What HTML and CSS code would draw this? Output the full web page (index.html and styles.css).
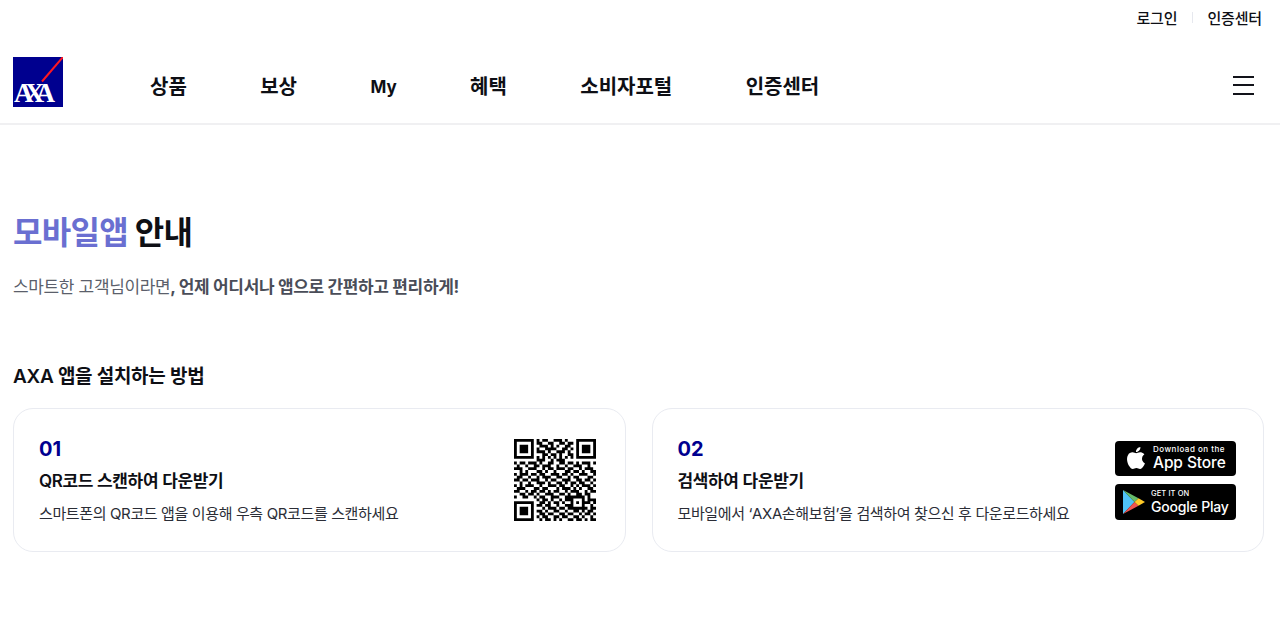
FILE: index.html
```html
<!DOCTYPE html>
<html lang="ko">
<head>
  <meta charset="UTF-8" />
  <meta name="viewport" content="width=device-width, initial-scale=1.0" />
  <title>모바일앱 안내</title>
  <link rel="stylesheet" href="styles.css">
</head>
<body>
  <header class="header">
    <div class="util">
      <a class="util__link">로그인</a>
      <span class="util__sep"></span>
      <a class="util__link">인증센터</a>
    </div>
    <div class="gnb">
      <svg class="logo" viewBox="0 0 50 50" aria-label="AXA">
        <rect width="50" height="50" fill="#00008f"/>
        <line x1="50" y1="0" x2="29" y2="24.5" stroke="#ff1721" stroke-width="2"/>
        <text class="logo__text" x="1" y="45" textLength="41" lengthAdjust="spacing">AXA</text>
      </svg>
      <nav class="gnb__menu">
        <a>상품</a>
        <a>보상</a>
        <a class="gnb__my">My</a>
        <a>혜택</a>
        <a>소비자포털</a>
        <a>인증센터</a>
      </nav>
      <button class="burger" aria-label="메뉴"><span></span><span></span><span></span></button>
    </div>
  </header>

  <main class="content">
    <h1 class="title"><em>모바일앱</em> 안내</h1>
    <p class="lead">스마트한 고객님이라면<b>, 언제 어디서나 앱으로 간편하고 편리하게!</b></p>

    <h2 class="sub-title">AXA 앱을 설치하는 방법</h2>
    <div class="cards">
      <section class="card">
        <div class="card__body">
          <strong class="card__num">01</strong>
          <h3 class="card__title">QR코드 스캔하여 다운받기</h3>
          <p class="card__desc">스마트폰의 QR코드 앱을 이용해 우측 QR코드를 스캔하세요</p>
        </div>
        <svg class="qr" id="qr" viewBox="0 0 29 29"></svg>
      </section>
      <section class="card">
        <div class="card__body">
          <strong class="card__num">02</strong>
          <h3 class="card__title">검색하여 다운받기</h3>
          <p class="card__desc">모바일에서 ‘AXA손해보험’을 검색하여 찾으신 후 다운로드하세요</p>
        </div>
        <div class="stores">
          <a class="store store--apple">
            <svg class="store__icon" viewBox="0 0 24 24"><path fill="#fff" d="M12.152 6.896c-.948 0-2.415-1.078-3.96-1.04-2.04.027-3.91 1.183-4.961 3.014-2.117 3.675-.546 9.103 1.519 12.09 1.013 1.454 2.208 3.09 3.792 3.039 1.52-.065 2.09-.987 3.935-.987 1.831 0 2.35.987 3.96.948 1.637-.026 2.676-1.48 3.676-2.948 1.156-1.688 1.636-3.325 1.662-3.415-.039-.013-3.182-1.221-3.22-4.857-.026-3.04 2.48-4.494 2.597-4.559-1.429-2.09-3.623-2.324-4.39-2.376-2-.156-3.675 1.09-4.61 1.09zM15.53 3.83c.843-1.012 1.4-2.427 1.245-3.83-1.207.052-2.662.805-3.532 1.818-.78.896-1.454 2.338-1.273 3.714 1.338.104 2.715-.688 3.559-1.701"/></svg>
            <span class="store__text"><small>Download on the</small><span>App Store</span></span>
          </a>
          <a class="store store--google">
            <svg class="store__icon" viewBox="0 0 22 24">
              <polygon fill="#4fc3f7" points="0,0 0,24 11.5,12"/>
              <polygon fill="#66bb6a" points="0,0 15.5,8.2 11.5,12"/>
              <polygon fill="#ef5350" points="0,24 15.5,15.8 11.5,12"/>
              <polygon fill="#ffca28" points="15.5,8.2 22,12 15.5,15.8 11.5,12"/>
            </svg>
            <span class="store__text"><small>GET IT ON</small><span>Google Play</span></span>
          </a>
        </div>
      </section>
    </div>
  </main>
  <script src="qr.js"></script>
</body>
</html>
```

FILE: styles.css
```css
*{margin:0;padding:0;box-sizing:border-box;}
body{
  font-family:Inter,"Noto Sans CJK KR","Noto Sans",sans-serif;
  background:#fff;color:#0e0f15;
}
a{color:inherit;text-decoration:none;}

/* header */
.header{border-bottom:2px solid #f0f0f2;height:125px;padding:0 18px 0 13px;}
.util{display:flex;justify-content:flex-end;align-items:center;height:34px;gap:14.5px;}
.util__link{font-size:15px;letter-spacing:-.15px;font-weight:500;}
.util__sep{width:1px;height:11px;background:#e6e8ee;}
.gnb{display:flex;align-items:center;padding-top:23px;}
.logo{width:50px;height:50px;flex:none;}
.logo__text{font-family:"Liberation Serif",serif;font-weight:700;font-size:27px;fill:#fff;}
.gnb__menu{
  display:flex;align-items:center;gap:73.4px;margin:7px 0 0 87px;
  font-size:20px;font-weight:700;
}
.gnb__my{font-size:17px;margin-top:3px;}
.burger{
  margin:6px 8px 0 auto;width:21px;height:19px;border:none;background:none;
  display:flex;flex-direction:column;justify-content:space-between;
}
.burger span{display:block;height:2px;background:#12131a;}

/* content */
.content{padding:0 16px 0 13px;}
.title{font-size:32px;font-weight:700;letter-spacing:-.7px;line-height:44px;margin-top:86px;}
.title em{font-style:normal;color:#6a6fd1;}
.lead{font-size:17px;letter-spacing:-.35px;color:#5b5f6b;line-height:26px;margin-top:19px;}
.lead b{font-weight:700;color:#4a4d58;}
.sub-title{font-size:19px;font-weight:600;letter-spacing:-.3px;line-height:28px;margin-top:63px;}
.cards{display:grid;grid-template-columns:1fr 1fr;gap:26px;margin-top:17px;}
.card{
  display:flex;justify-content:space-between;align-items:center;
  height:144px;padding:0 27px 0 25px;
  border:1px solid #e9ebf1;border-radius:20px;
}
.card__num{display:block;font-size:20px;font-weight:700;color:#00008f;line-height:26px;}
.card__title{font-size:17px;font-weight:600;letter-spacing:-.35px;line-height:24px;margin-top:7px;}
.card__desc{font-size:15px;letter-spacing:-.37px;line-height:22px;margin-top:10px;color:#2b2d36;}
.qr{width:82px;height:82px;flex:none;margin-right:2px;}

/* store badges */
.stores{display:flex;flex-direction:column;gap:8px;width:121px;}
.store{
  display:flex;align-items:center;gap:6px;height:36px;padding-left:10px;
  background:#000;border-radius:4px;color:#fff;
}
.store--apple{height:35px;}
.store--google{padding-left:8px;}
.store__icon{width:22px;height:24px;flex:none;}
.store__text{display:flex;flex-direction:column;font-size:15.5px;font-weight:500;line-height:17px;letter-spacing:-.1px;white-space:nowrap;}
.store__text small{font-size:8px;line-height:9px;letter-spacing:.5px;}
.store--google .store__text{font-size:14px;letter-spacing:-.2px;}
.store--google small{font-size:7.5px;letter-spacing:.1px;}
```

FILE: qr.js
```js
// qr modules, one string per row
var rows = [
  "11111110101100111010001111111",
  "10000010110011001101101000001",
  "10111010011101010011001011101",
  "10111010100111100110101011101",
  "10111010111010011101001011101",
  "10000010001101101001101000001",
  "11111110101010101010101111111",
  "00000000111001011100000000000",
  "10110111010011001101101011101",
  "01001001101110010010011100100",
  "11100111001011011101100101110",
  "00101000110100100011011010011",
  "10111011011001110110100111001",
  "01100100101110011001011000110",
  "11011011100101100111001101101",
  "00100100111010011010110110010",
  "10101110010011101100101011101",
  "01110001101100010111010100110",
  "11001011011010110010111001011",
  "00110110100111001101001101100",
  "10011001011001110011111110100",
  "00000000101101001011100010111",
  "11111110011010110100101011101",
  "10000010110110010011100010010",
  "10111010001011101101111111011",
  "10111010110100110010011010110",
  "10111010011011001101100101101",
  "10000010101100110110011010010",
  "11111110010110101001101101011"
];
var d = "";
rows.forEach(function (row, y) {
  row.split("").forEach(function (c, x) {
    if (c === "1") d += "M" + x + " " + y + "h1v1h-1z";
  });
});
var path = document.createElementNS("http://www.w3.org/2000/svg", "path");
path.setAttribute("d", d);
document.getElementById("qr").appendChild(path);
```
